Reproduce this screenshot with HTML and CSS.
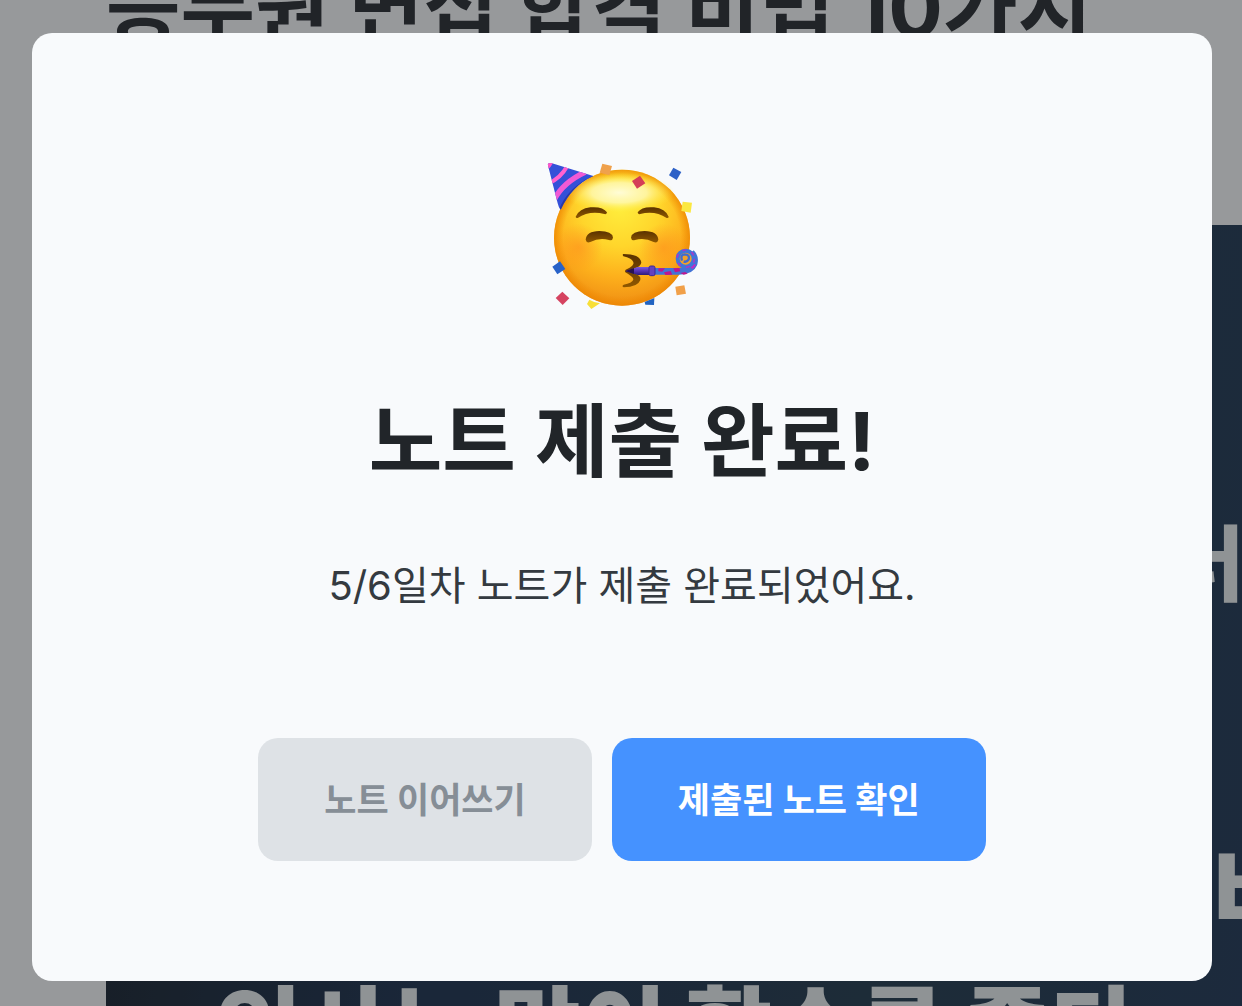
FILE: index.html
```html
<!DOCTYPE html>
<html lang="ko">
<head>
  <meta charset="UTF-8" />
  <title>노트 제출 완료</title>
  <meta name="viewport" content="width=device-width, initial-scale=1" />
  <link rel="stylesheet" href="styles.css">
</head>
<body>
  <main class="page">
    <h1 class="page-title">승무원 면접 합격 비법 10가지</h1>
    <div class="banner">
      <p class="banner-side">더</p>
      <p class="banner-side">비</p>
      <p class="banner-line">인사는 많이 할수록 좋다</p>
    </div>
  </main>

  <div class="overlay">
    <section class="modal" role="dialog" aria-modal="true" aria-labelledby="modal-title">
      <svg class="emoji" viewBox="36 9 480 480" aria-hidden="true">
        <defs>
          <radialGradient id="face" gradientUnits="userSpaceOnUse" cx="270" cy="170" r="300">
            <stop offset="0" stop-color="#ffee3d" />
            <stop offset="0.4" stop-color="#ffd52b" />
            <stop offset="0.7" stop-color="#fdb01c" />
            <stop offset="1" stop-color="#ef8d13" />
          </radialGradient>
          <radialGradient id="rim">
            <stop offset="0.86" stop-color="#f08a00" stop-opacity="0" />
            <stop offset="1" stop-color="#ec8500" stop-opacity="0.75" />
          </radialGradient>
          <radialGradient id="shine">
            <stop offset="0" stop-color="#fffcd6" />
            <stop offset="0.5" stop-color="#fffab8" stop-opacity="0.8" />
            <stop offset="1" stop-color="#ffee3d" stop-opacity="0" />
          </radialGradient>
          <radialGradient id="cheek">
            <stop offset="0" stop-color="#ff8a1c" stop-opacity="0.55" />
            <stop offset="1" stop-color="#ff8a1c" stop-opacity="0" />
          </radialGradient>
          <linearGradient id="brown" x1="0" y1="0" x2="0" y2="1">
            <stop offset="0" stop-color="#5a3200" />
            <stop offset="1" stop-color="#8f5800" />
          </linearGradient>
          <linearGradient id="tube" x1="0" y1="0" x2="0" y2="1">
            <stop offset="0" stop-color="#7c5ae0" />
            <stop offset="0.5" stop-color="#5632b4" />
            <stop offset="1" stop-color="#2c1a78" />
          </linearGradient>
          <clipPath id="hat">
            <path d="M53 43Q57 37 66 40L190 78Q126 106 92 179Q86 174 83 160Z" />
          </clipPath>
        </defs>

        <circle cx="276" cy="263" r="204" fill="url(#face)" />
        <circle cx="276" cy="263" r="204" fill="url(#rim)" />
        <ellipse cx="268" cy="128" rx="165" ry="60" fill="url(#shine)" />
        <circle cx="146" cy="292" r="72" fill="url(#cheek)" />
        <circle cx="400" cy="292" r="72" fill="url(#cheek)" />

        <!-- party hat -->
        <g clip-path="url(#hat)">
          <rect x="40" y="30" width="160" height="155" fill="#3450d8" />
          <path d="M44 66Q60 58 72 34L48 28Z" fill="#ff55c8" />
          <path d="M56 100Q92 84 112 48" fill="none" stroke="#ff62d0" stroke-width="12" />
          <path d="M72 150Q98 98 166 66" fill="none" stroke="#f05ad5" stroke-width="16" />
          <path d="M92 184Q118 116 196 82" fill="none" stroke="#2b39a8" stroke-width="14" />
        </g>

        <!-- brows and eyes -->
        <path d="M137 200Q148 176 181 172Q219 169 231 187Q231 194 223 192Q178 181 143 204Q137 205 137 200Z" fill="url(#brown)" />
        <path d="M416 200Q406 176 372 172Q335 169 323 187Q323 194 331 192Q375 181 410 204Q416 205 416 200Z" fill="url(#brown)" />
        <path d="M167 269Q169 244 208 243Q247 243 249 263Q247 274 237 270Q208 262 181 276Q170 281 167 269Z" fill="url(#brown)" />
        <path d="M385 269Q383 244 344 243Q305 243 303 263Q305 274 315 270Q344 262 371 276Q382 281 385 269Z" fill="url(#brown)" />

        <!-- mouth -->
        <path d="M280 312Q330 312 334 337Q334 350 308 358L309 369Q335 376 331 390Q324 411 281 412Q274 408 281 404Q306 399 310 389Q311 381 286 367Q283 364 287 359Q315 347 310 336Q304 324 280 319Q276 315 280 312Z" fill="url(#brown)" />

        <!-- blower -->
        <path d="M372 364H440Q482 366 492 342Q498 322 484 308" fill="none" stroke="#4273d6" stroke-width="20" />
        <path d="M385 355l20 0-8 10-12-1zM402 367l20-4 5 11-21 1zM430 355l18-1 3 10-16 3zM451 369l15-3 7 5-12 3z" fill="#bd168f" />
        <path d="M480 352l10-12 8 5-9 12z" fill="#bd2dc4" />
        <circle cx="467" cy="326" r="24" fill="#f2a12a" stroke="#3f76da" stroke-width="12" />
        <circle cx="467" cy="326" r="26" fill="none" stroke="#a838c8" stroke-width="5" stroke-dasharray="12 16" />
        <path d="M456 332Q450 314 464 313Q480 314 476 328Q470 338 461 334" fill="none" stroke="#3f6ccf" stroke-width="7" />

        <path d="M286 363L323 351H372V375H323Z" fill="url(#tube)" />
        <path d="M286 363L312 354V372Z" fill="#281350" />
        <rect x="357" y="348" width="18" height="29" rx="5" fill="#6541be" stroke="#3f2793" stroke-width="3" />

        <!-- confetti -->
        <path d="M217 41L246 48L238 76L209 68Z" fill="#efa14c" />
        <path d="M330 77L346 100L321 116L306 93Z" fill="#d43e57" />
        <path d="M430 53L454 66L440 90L417 76Z" fill="#2d61c7" />
        <path d="M458 155L486 158L482 188L454 183Z" fill="#fbe840" />
        <path d="M90 334L106 357L82 373L67 350Z" fill="#2862c8" />
        <path d="M97 425L118 445L98 465L77 444Z" fill="#d54360" />
        <path d="M178 449Q193 458 210 460L184 477L171 462Z" fill="#f8df38" />
        <path d="M344 456L373 444L372 465L346 464Z" fill="#2264c2" />
        <path d="M436 410L463 406L468 431L440 436Z" fill="#f1a049" />
      </svg>
      <h2 class="modal-title" id="modal-title">노트 제출 완료!</h2>
      <p class="modal-text">5/6일차 노트가 제출 완료되었어요.</p>
      <div class="actions">
        <button type="button" class="btn btn-secondary">노트 이어쓰기</button>
        <button type="button" class="btn btn-primary">제출된 노트 확인</button>
      </div>
    </section>
  </div>
</body>
</html>
```
FILE: styles.css
```css
* { box-sizing: border-box; }
body {
  background: #f8f9fa;
  color: #212529;
  font-family: Inter, "Noto Sans CJK KR", sans-serif;
  margin: 0;
  height: 100vh;
  overflow: hidden;
}
h1, h2, p { margin: 0; }

.page { display: flex; flex-direction: column; height: 100vh; padding-left: 106px; }
.page-title {
  flex: none;
  height: 225px;
  margin-top: -50px;
  margin-bottom: 50px;
  font-size: 81px;
  line-height: 116px;
  white-space: nowrap;
}
.banner {
  flex: 1;
  min-height: 0;
  overflow: hidden;
  background: linear-gradient(100deg, #0f171c 0%, #142a48 35%, #1b3345 70%, #18314f 100%);
  color: #eaeeee;
  font-size: 94px;
  font-weight: 900;
  line-height: 120px;
  white-space: nowrap;
}
.banner-side { padding-top: 280px; padding-left: 1063px; font-size: 82px; }
.banner-side + .banner-side { padding-top: 210px; padding-left: 1105px; font-size: 100px; }
.banner-line { padding-top: 16px; padding-left: 110px; }

.overlay {
  position: fixed;
  inset: 0;
  padding: 33px 30px 25px 32px;
  background: rgba(33, 36, 40, 0.45);
}
.modal {
  display: flex;
  flex-direction: column;
  align-items: center;
  padding: 120px 40px;
  background: #f8fafc;
  border-radius: 20px;
}
.emoji { width: 160px; height: 160px; }
.modal-title { margin-top: 80px; font-size: 80px; line-height: 96px; }
.modal-text { margin-top: 67px; color: #343a40; font-size: 40px; line-height: 60px; }
.actions { display: flex; gap: 20px; margin-top: 122px; }
.btn {
  border: none;
  border-radius: 20px;
  padding: 37px 66px 35px;
  font-family: inherit;
  font-size: 35px;
  font-weight: 700;
  line-height: 51px;
  cursor: pointer;
}
.btn-secondary { background: #dee2e6; color: #868e96; }
.btn-primary { background: #4592ff; color: #fff; }
```
